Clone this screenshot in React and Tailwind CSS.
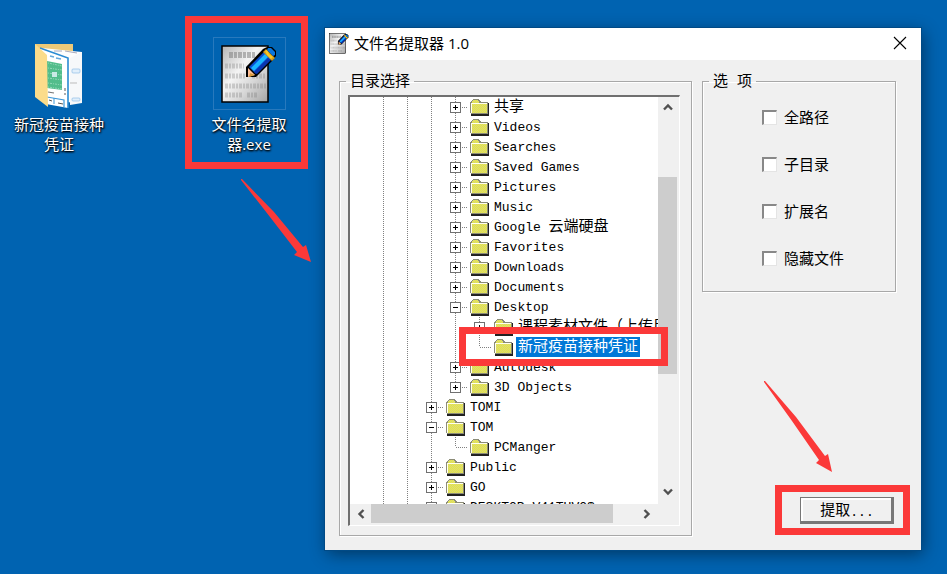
import { useState } from "react";

const TREE = [
  { id: "share", depth: 3, name: "共享", state: "closed" },
  { id: "videos", depth: 3, name: "Videos", state: "closed" },
  { id: "searches", depth: 3, name: "Searches", state: "closed" },
  { id: "saved", depth: 3, name: "Saved Games", state: "closed" },
  { id: "pictures", depth: 3, name: "Pictures", state: "closed" },
  { id: "music", depth: 3, name: "Music", state: "closed" },
  { id: "google", depth: 3, name: "Google 云端硬盘", state: "closed" },
  { id: "favorites", depth: 3, name: "Favorites", state: "closed" },
  { id: "downloads", depth: 3, name: "Downloads", state: "closed" },
  { id: "documents", depth: 3, name: "Documents", state: "closed" },
  { id: "desktop", depth: 3, name: "Desktop", state: "open" },
  { id: "course", depth: 4, name: "课程素材文件（上传用）", state: "closed" },
  { id: "vaccine", depth: 4, name: "新冠疫苗接种凭证", state: "leaf", last: true },
  { id: "autodesk", depth: 3, name: "Autodesk", state: "closed" },
  { id: "objects", depth: 3, name: "3D Objects", state: "closed", last: true },
  { id: "tomi", depth: 2, name: "TOMI", state: "closed" },
  { id: "tom", depth: 2, name: "TOM", state: "open" },
  { id: "pcmanger", depth: 3, name: "PCManger", state: "leaf", last: true },
  { id: "public", depth: 2, name: "Public", state: "closed" },
  { id: "go", depth: 2, name: "GO", state: "closed" },
  { id: "desktop-pc", depth: 2, name: "DESKTOP-V41TUVO$", state: "closed" },
];

const OPTIONS = ["全路径", "子目录", "扩展名", "隐藏文件"];

function NotepadIcon({ className }) {
  return (
    <svg viewBox="0 0 56 60" className={className} aria-hidden="true">
      <defs>
        <linearGradient id="paper" x1="0" y1="0" x2="1" y2="1">
          <stop offset="0" stopColor="#b4b4b4" />
          <stop offset="0.4" stopColor="#f4f4f4" />
          <stop offset="0.65" stopColor="#d8d8d8" />
          <stop offset="1" stopColor="#a4a4a4" />
        </linearGradient>
      </defs>
      <rect x="1" y="2" width="46" height="56" fill="url(#paper)" stroke="#000" strokeWidth="1.5" />
      <g fill="none" stroke="#777">
        <path d="M8 11h26" strokeWidth="6" strokeDasharray="4 1 3 1" opacity="0.5" />
        <path d="M4 22h19M4 32h20M31 32h14M4 42h42M4 51h17M26 51h11" strokeWidth="5" strokeDasharray="3 1 2 1" opacity="0.3" />
      </g>
      <path d="M25 23L42 5l4-2h5l4 4v5l-3 4-17 17h-10z" fill="#000" />
      <path d="M28 23L43 8l7 7-15 15z" fill="#0a4fd0" />
      <path d="M30 24L44 10l3 3-14 14z" fill="#19b5ff" />
      <path d="M33 28l14-14 3 2-14 14z" fill="#0a35b0" />
      <path d="M42 8l3-3 9 9-3 3z" fill="#d39b18" />
      <path d="M44 7l2 4 4 4 2-2-4-3-2-4z" fill="#f5c926" />
      <path d="M47 4h3l4 4v3l-2 1-6-6z" fill="#0876df" />
      <path d="M27 24l7 7-7 2z" fill="#ffc09a" />
      <path d="M29 29l5 2-6 2z" fill="#d99b3e" />
    </svg>
  );
}

function DesktopFolderIcon() {
  return (
    <svg viewBox="0 0 50 66" className="h-[66px] w-[50px]" aria-hidden="true">
      <path d="M1 1h38v50H1z" fill="#ecc978" />
      <path d="M8 5l40 4v51l-36-2z" fill="#fdfdfd" />
      <path d="M20 8h8M31 8l12 2" stroke="#aab" strokeWidth="1" />
      <path d="M36 15l12-6v51l-12 2z" fill="#f6f8fa" />
      <rect x="38" y="26" width="8" height="4" rx="1" fill="#e1effb" stroke="#8fbfe6" strokeWidth="0.7" />
      <path d="M36 40h7" stroke="#bbb" />
      <rect x="38" y="55" width="8" height="3" rx="1" fill="#e1effb" stroke="#8fbfe6" strokeWidth="0.7" />
      <path d="M6 5l28 10v50L12 61z" fill="#fff" />
      <path d="M6 5l28 10v50" fill="none" stroke="#2b8bd3" strokeWidth="1.6" />
      <path d="M16 13l4 1M22 15l5 1" stroke="#64a8dc" strokeWidth="1.5" />
      <path d="M13 18l15 3v26l-15-2z" fill="#52bd8b" />
      <path d="M14 20l14 3M14 25l14 2M14 30l14 2M14 35l14 2M14 40l14 2M14 44l14 2" stroke="#8fd8b5" strokeWidth="1" strokeDasharray="1 1 2 1" />
      <rect x="18" y="29" width="5" height="5" fill="#c9e9e5" />
      <path d="M14 49l6 1M31 45v3M31 50v2" stroke="#777" strokeWidth="1.2" />
      <path d="M13 54l17 3v7" fill="none" stroke="#3c97d8" strokeWidth="1.2" />
      <path d="M20 55v6" stroke="#3c97d8" />
      <path d="M15 57l3 1M24 60l5 1" stroke="#555" />
      <path d="M1 1l12 11 1 52L1 54z" fill="#fbdc8b" />
    </svg>
  );
}

function FolderIcon() {
  return (
    <svg viewBox="0 0 20 17" className="ml-0.5 h-[17px] w-5 shrink-0" aria-hidden="true" shapeRendering="crispEdges">
      <defs>
        <pattern id="dither" width="2" height="2" patternUnits="userSpaceOnUse">
          <rect width="2" height="2" fill="#e8e840" />
          <path d="M0 0h1v1H0zM1 1h1v1H1z" fill="#d8d87c" />
        </pattern>
      </defs>
      <path d="M1 17h18V4h-2v11H1z" fill="#222" />
      <path d="M0 3h1V2h1V1h1V0h6v1h1v1h1v1h7v12H1v-1H0z" fill="#8c8c78" />
      <path d="M1 4h1V2h1V1h5v1h1v2h8v10H1z" fill="url(#dither)" />
      <path d="M1 5V4h16v1H2v9H1z" fill="#fffff0" />
    </svg>
  );
}

// One 24px column of the tree: dotted guides plus an optional expander box
function Guide({ up = true, down = true, branch, state }) {
  return (
    <svg viewBox="0 0 24 20" className="h-5 w-6 shrink-0" aria-hidden="true" shapeRendering="crispEdges">
      <g stroke="#808080" strokeDasharray="1 1" fill="none">
        {up && <path d="M11.5 0v10" />}
        {down && <path d="M11.5 10v10" />}
        {branch && <path d="M12 10.5h12" />}
      </g>
      {(state === "closed" || state === "open") && (
        <>
          <rect x="6.5" y="5.5" width="10" height="10" fill="#fff" stroke="#707070" />
          <path d="M9 10h5v1H9z" fill="#000" />
          {state === "closed" && <path d="M11 8h1v5h-1z" fill="#000" />}
        </>
      )}
    </svg>
  );
}

function TreeLabel({ text }) {
  return text.split(/([\x20-\x7e]+)/).filter(Boolean).map((part, i) => (
    <span key={i} className={/^[\x20-\x7e]/.test(part) ? "text-[13px]" : "text-[15px]"}>
      {part}
    </span>
  ));
}

function TreeRow({ node, selected, onSelect }) {
  return (
    <li role="treeitem" aria-selected={selected} className="flex h-5 items-center">
      {Array.from({ length: node.depth }, (_, i) => (
        <Guide key={i} />
      ))}
      <Guide branch state={node.state} down={!node.last} />
      <FolderIcon />
      <button
        type="button"
        onClick={() => onSelect(node.id)}
        className={`ml-0.5 flex h-5 items-center px-0.5 pt-0.5 font-['Liberation_Mono','Noto_Sans_CJK_SC',monospace] leading-5 whitespace-pre ${
          selected ? "bg-[#0078d7] text-white" : "text-black"
        }`}
      >
        <TreeLabel text={node.name} />
      </button>
    </li>
  );
}

function Chevron({ d }) {
  return (
    <svg viewBox="0 0 10 10" className="size-2.5" aria-hidden="true">
      <path d={d} fill="none" stroke="#505050" strokeWidth="2.4" />
    </svg>
  );
}

function GroupBox({ title, className, children }) {
  return (
    <fieldset className={`min-w-0 border border-[#a8a8a8] shadow-[1px_1px_0_#fff,inset_1px_1px_0_#fff] ${className}`}>
      <legend className="ml-1.5 h-5 px-1 pt-0.5 font-['Liberation_Mono','Noto_Sans_CJK_SC',monospace] text-[15px] leading-5 whitespace-pre">
        {title}
      </legend>
      {children}
    </fieldset>
  );
}

function DirectoryTree() {
  const [selected, setSelected] = useState("vaccine");
  return (
    <div className="flex min-h-0 flex-1 flex-col border-t-2 border-l-2 border-r border-b border-t-[#707070] border-l-[#707070] border-r-white border-b-white bg-[#f0f0f0] pr-0.5 pb-0.5">
      <div className="flex min-h-0 flex-1">
        <ul role="tree" aria-label="目录选择" className="min-w-0 flex-1 overflow-hidden bg-white pl-[22px]">
          {TREE.map((node) => (
            <TreeRow key={node.id} node={node} selected={node.id === selected} onSelect={setSelected} />
          ))}
        </ul>
        <div className="flex w-[19px] flex-col items-center justify-between">
          <button type="button" aria-label="Scroll up" className="flex h-5 items-center">
            <Chevron d="M1 7.5l4-4 4 4" />
          </button>
          <div className="flex w-full flex-1 flex-col">
            <div className="h-[60px]" />
            <div className="h-[197px] bg-[#cdcdcd]" />
          </div>
          <button type="button" aria-label="Scroll down" className="flex h-6 items-center">
            <Chevron d="M1 2.5l4 4 4-4" />
          </button>
        </div>
      </div>
      <div className="flex h-[19px] items-center pr-[18px]">
        <button type="button" aria-label="Scroll left" className="flex w-[21px] justify-center">
          <Chevron d="M7.5 1l-4 4 4 4" />
        </button>
        <div className="h-full flex-1">
          <div className="h-full w-11/12 bg-[#cdcdcd]" />
        </div>
        <button type="button" aria-label="Scroll right" className="flex w-6 justify-center">
          <Chevron d="M2.5 1l4 4-4 4" />
        </button>
      </div>
    </div>
  );
}

function ExtractorWindow() {
  return (
    <main className="mt-7 mr-[26px] mb-6 flex min-w-0 flex-1 flex-col bg-[#f0f0f0] shadow-[0_0_0_1px_#004a86,2px_4px_16px_rgba(0,0,0,0.45)]">
      <header className="flex h-8 shrink-0 items-center bg-white pr-3.5 pb-0.5 pl-1">
        <NotepadIcon className="h-[21px] w-5" />
        <h1 className="ml-[5px] flex-1 text-[15px]">文件名提取器 1.0</h1>
        <button type="button" aria-label="Close">
          <svg viewBox="0 0 14 14" className="size-3.5" aria-hidden="true">
            <path d="M1 1l12 12M13 1L1 13" stroke="#000" strokeWidth="1.1" />
          </svg>
        </button>
      </header>

      <div className="flex min-h-0 flex-1 gap-2.5 pt-[11px] pr-[25px] pb-3.5 pl-3.5">
        <GroupBox title="目录选择" className="flex flex-1 flex-col">
          <div className="flex h-full min-h-0 flex-col pt-1 pr-[11px] pb-[9px] pl-2">
            <DirectoryTree />
          </div>
        </GroupBox>

        <div className="flex w-[194px] shrink-0 flex-col justify-between">
          <GroupBox title="选 项" className="h-[221px]">
            <div className="flex flex-col gap-[27px] pt-4 pl-[59px]">
              {OPTIONS.map((name) => (
                <label key={name} className="flex h-5 items-center gap-[7px] text-[15px]">
                  <input
                    type="checkbox"
                    className="size-[15px] appearance-none border-t-2 border-l-2 border-r border-b border-t-[#888] border-l-[#888] border-r-[#e4e4e4] border-b-[#e4e4e4] bg-white checked:bg-[#0078d7]"
                  />
                  {name}
                </label>
              ))}
            </div>
          </GroupBox>
          <button
            type="button"
            className="mr-0.5 mb-3 flex h-[27px] w-[94px] items-center justify-center self-end border border-[#777] bg-[#f0f0f0] pt-1 font-['Liberation_Mono','Noto_Sans_CJK_SC',monospace] text-[15px] shadow-[inset_-2px_-2px_0_#777,inset_2px_2px_0_#fff]"
          >
            提取<span className="text-[13px]">...</span>
          </button>
        </div>
      </div>
    </main>
  );
}

function DesktopItem({ icon, label }) {
  return (
    <button
      type="button"
      className="flex w-24 flex-col items-center text-[15px] leading-5 text-white [text-shadow:1px_1px_2px_#000,0_1px_2px_#000]"
    >
      {icon}
      <span className="whitespace-pre-line">{label}</span>
    </button>
  );
}

function Annotations() {
  return (
    <div className="pointer-events-none absolute inset-0 overflow-hidden">
      <div className="absolute top-4 left-[185px] h-[153px] w-[123px] border-7 border-[#fb3939]" />
      <div className="absolute top-[327px] left-[459px] h-[39px] w-[209px] border-7 border-[#fb3939]" />
      <div className="absolute top-[485px] left-[775px] h-[50px] w-[135px] border-7 border-[#fb3939]" />
      <svg className="absolute top-0 left-0 h-full w-full" aria-hidden="true" fill="#fb3939">
        <path d="M241 179L242 179L274 212L303 247L306 245L311 262L294 255L297 252L270 217L241 180Z" />
        <path d="M764 381L765 381L796 417L825 456L828 454L832 472L816 463L819 460L792 421L764 382Z" />
      </svg>
    </div>
  );
}

export default function App() {
  return (
    <div className="relative flex h-screen bg-[#0063b1] font-['Open_Sans','Noto_Sans_CJK_SC',sans-serif] text-black">
      <aside className="flex w-[325px] shrink-0 items-start gap-[94px] pt-[37px] pl-[11px]">
        <DesktopItem
          label={"新冠疫苗接种\n凭证"}
          icon={
            <span className="flex h-[77px] items-center">
              <DesktopFolderIcon />
            </span>
          }
        />
        <DesktopItem
          label={"文件名提取\n器.exe"}
          icon={
            <span className="mb-1 flex size-[73px] items-center justify-center border border-[#2879bd]">
              <NotepadIcon className="h-[60px] w-14" />
            </span>
          }
        />
      </aside>
      <ExtractorWindow />
      <Annotations />
    </div>
  );
}
